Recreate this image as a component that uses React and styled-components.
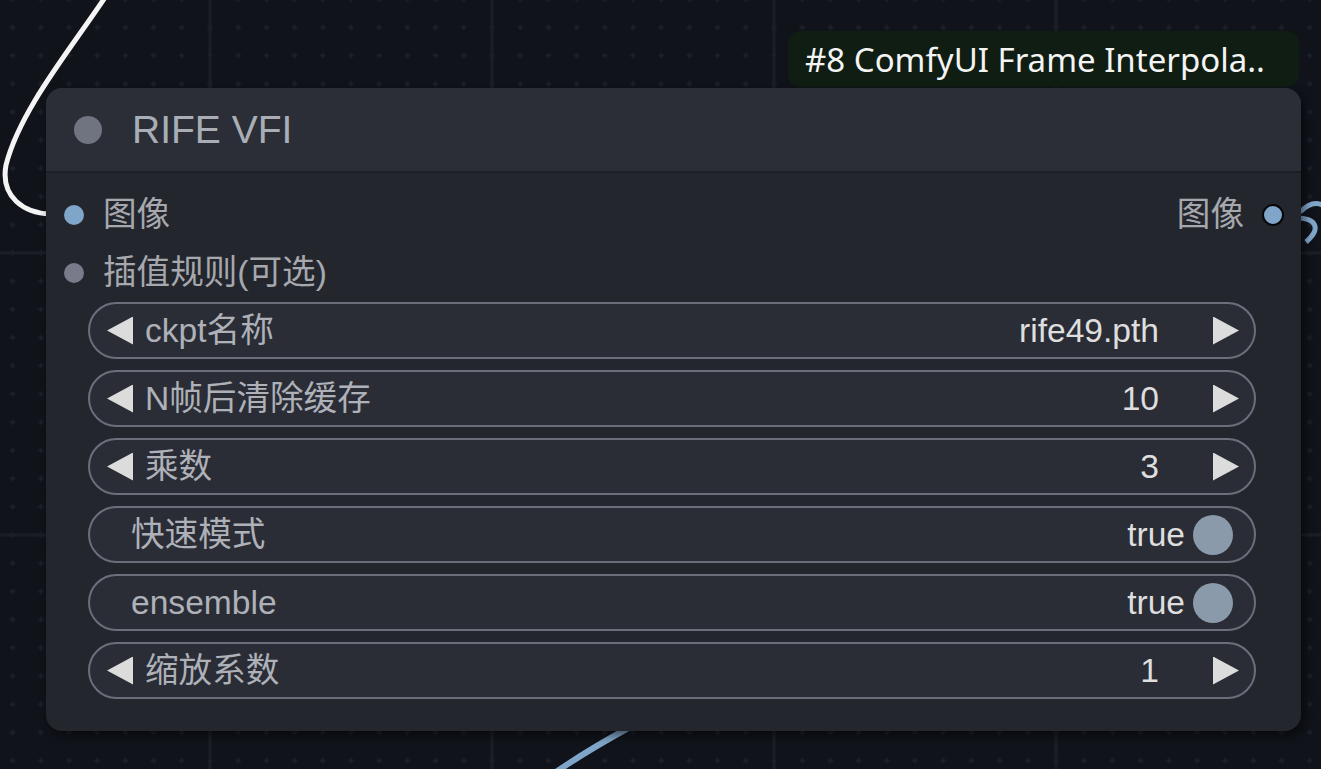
import React from 'react';
import styled, { createGlobalStyle } from 'styled-components';

const GlobalStyle = createGlobalStyle`
  html, body {
    margin: 0;
    padding: 0;
    background: #10131a;
    overflow: hidden;
  }
`;

const FONT = `"Liberation Sans", "Noto Sans CJK SC", sans-serif`;

const Canvas = styled.div`
  position: relative;
  width: 1321px;
  height: 769px;
  overflow: hidden;
  background: #10131a;
  font-family: ${FONT};
`;

const Backdrop = styled.svg`
  position: absolute;
  inset: 0;
  width: 100%;
  height: 100%;
`;

const Badge = styled.div`
  position: absolute;
  left: 788px;
  top: 31px;
  width: 511px;
  height: 56px;
  box-sizing: border-box;
  padding: 0 17px;
  border-radius: 12px;
  background: #0f1d12;
  color: #f4f4f4;
  font-family: "Noto Sans", "Open Sans", sans-serif;
  font-size: 33px;
  display: flex;
  align-items: center;
  white-space: nowrap;
`;

const Node = styled.div`
  position: absolute;
  left: 46px;
  top: 88px;
  width: 1255px;
  height: 643px;
  border-radius: 16px;
  background: #23262d;
  box-shadow: 3px 4px 10px rgba(0, 0, 0, 0.55);
  display: flex;
  flex-direction: column;
  overflow: hidden;
`;

const TitleBar = styled.div`
  height: 85px;
  flex-shrink: 0;
  box-sizing: border-box;
  background: #2b2e37;
  border-bottom: 2px solid #1d1f26;
  display: flex;
  align-items: center;
  padding-left: 28px;
  gap: 30px;
`;

const TitleDot = styled.span`
  width: 28px;
  height: 28px;
  border-radius: 50%;
  background: #6f7480;
`;

const Title = styled.span`
  font-size: 39px;
  color: #a9adb6;
  line-height: 1;
`;

const Body = styled.div`
  display: flex;
  flex-direction: column;
  padding: 13px 45px 0 42px;
`;

const SlotRow = styled.div`
  height: 58px;
  margin: 0 -28px 0 -24px;
  display: flex;
  align-items: center;
  justify-content: space-between;
`;

const Slot = styled.div`
  display: flex;
  align-items: center;
  gap: ${(p) => (p.$out ? '18px' : '19px')};
  font-size: 33.6px;
  color: #a6a8ae;
  line-height: 1;
`;

const SlotDot = styled.span`
  width: ${(p) => (p.$out ? '18px' : '20px')};
  height: ${(p) => (p.$out ? '18px' : '20px')};
  border-radius: 50%;
  background: ${(p) => p.$color};
  border: ${(p) => (p.$out ? '2px solid #050608' : 'none')};
`;

const Widgets = styled.div`
  display: flex;
  flex-direction: column;
  gap: 11px;
`;

const Widget = styled.div`
  height: 57px;
  box-sizing: border-box;
  border: 2px solid #6b6f7b;
  border-radius: 29px;
  background: #2a2d36;
  display: flex;
  align-items: center;
  padding: ${(p) => (p.$toggle ? '0 21px 0 41px' : '0 15px 0 17px')};
  font-size: 33.6px;
  line-height: 1;
`;

const Arrow = styled.span`
  width: 26px;
  height: 28px;
  background: #dcdcdc;
  clip-path: ${(p) =>
    p.$right ? 'polygon(0 0, 100% 50%, 0 100%)' : 'polygon(100% 0, 0 50%, 100% 100%)'};
  flex-shrink: 0;
`;

const Label = styled.span`
  color: #aeb1b8;
  margin-left: ${(p) => (p.$arrow ? '12px' : '0')};
`;

const Value = styled.span`
  color: #dedede;
  margin-left: auto;
  margin-right: ${(p) => (p.$toggle ? '8px' : '54px')};
`;

const Knob = styled.span`
  width: 40px;
  height: 40px;
  border-radius: 50%;
  background: #8a9aab;
`;

const widgets = [
  { label: 'ckpt名称', value: 'rife49.pth' },
  { label: 'N帧后清除缓存', value: '10' },
  { label: '乘数', value: '3' },
  { label: '快速模式', value: 'true', toggle: true },
  { label: 'ensemble', value: 'true', toggle: true },
  { label: '缩放系数', value: '1' },
];

function Grid() {
  return (
    <Backdrop viewBox="0 0 1321 769">
      <defs>
        <pattern id="minor" patternUnits="userSpaceOnUse" x={210 - 14.1} y={253 - 14.1} width="28.2" height="28.2">
          <path d="M11.4 14.1h5.4M14.1 11.4v5.4" stroke="#1c2029" strokeWidth="1.8" />
        </pattern>
        <pattern id="major" patternUnits="userSpaceOnUse" x={210 - 1.5} y={253 - 1.5} width="282" height="282">
          <rect x="0" y="0" width="3" height="282" fill="#1b1e26" />
          <rect x="0" y="0" width="282" height="3" fill="#1b1e26" />
        </pattern>
      </defs>
      <rect width="1321" height="769" fill="#10131a" />
      <rect width="1321" height="769" fill="url(#minor)" />
      <rect width="1321" height="769" fill="url(#major)" />
      {/* white link into 图像 */}
      <path d="M106 -4 C70 50 20 110 6 165 C0 198 25 213 50 214" fill="none" stroke="#f4f4f4" strokeWidth="5" />
      {/* blue links */}
      <path d="M1296 218 C1316 218 1322 228 1306 242" fill="none" stroke="#7fa5c8" strokeWidth="5" />
      <path d="M1300 212 C1310 202 1318 202 1324 206" fill="none" stroke="#7fa5c8" strokeWidth="5" />
      <path d="M556 772 C585 752 610 738 632 726" fill="none" stroke="#7fa5c8" strokeWidth="6" />
    </Backdrop>
  );
}

export default function App() {
  return (
    <>
      <GlobalStyle />
      <Canvas>
        <Grid />
        <Badge>#8 ComfyUI Frame Interpola..</Badge>
        <Node>
          <TitleBar>
            <TitleDot />
            <Title>RIFE VFI</Title>
          </TitleBar>
          <Body>
            <SlotRow>
              <Slot>
                <SlotDot $color="#7fa5c8" />
                图像
              </Slot>
              <Slot $out>
                图像
                <SlotDot $out $color="#7fa5c8" />
              </Slot>
            </SlotRow>
            <SlotRow>
              <Slot>
                <SlotDot $color="#797b8a" />
                插值规则(可选)
              </Slot>
            </SlotRow>
            <Widgets>
              {widgets.map((w) =>
                w.toggle ? (
                  <Widget key={w.label} $toggle>
                    <Label>{w.label}</Label>
                    <Value $toggle>{w.value}</Value>
                    <Knob />
                  </Widget>
                ) : (
                  <Widget key={w.label}>
                    <Arrow />
                    <Label $arrow>{w.label}</Label>
                    <Value>{w.value}</Value>
                    <Arrow $right />
                  </Widget>
                )
              )}
            </Widgets>
          </Body>
        </Node>
      </Canvas>
    </>
  );
}
